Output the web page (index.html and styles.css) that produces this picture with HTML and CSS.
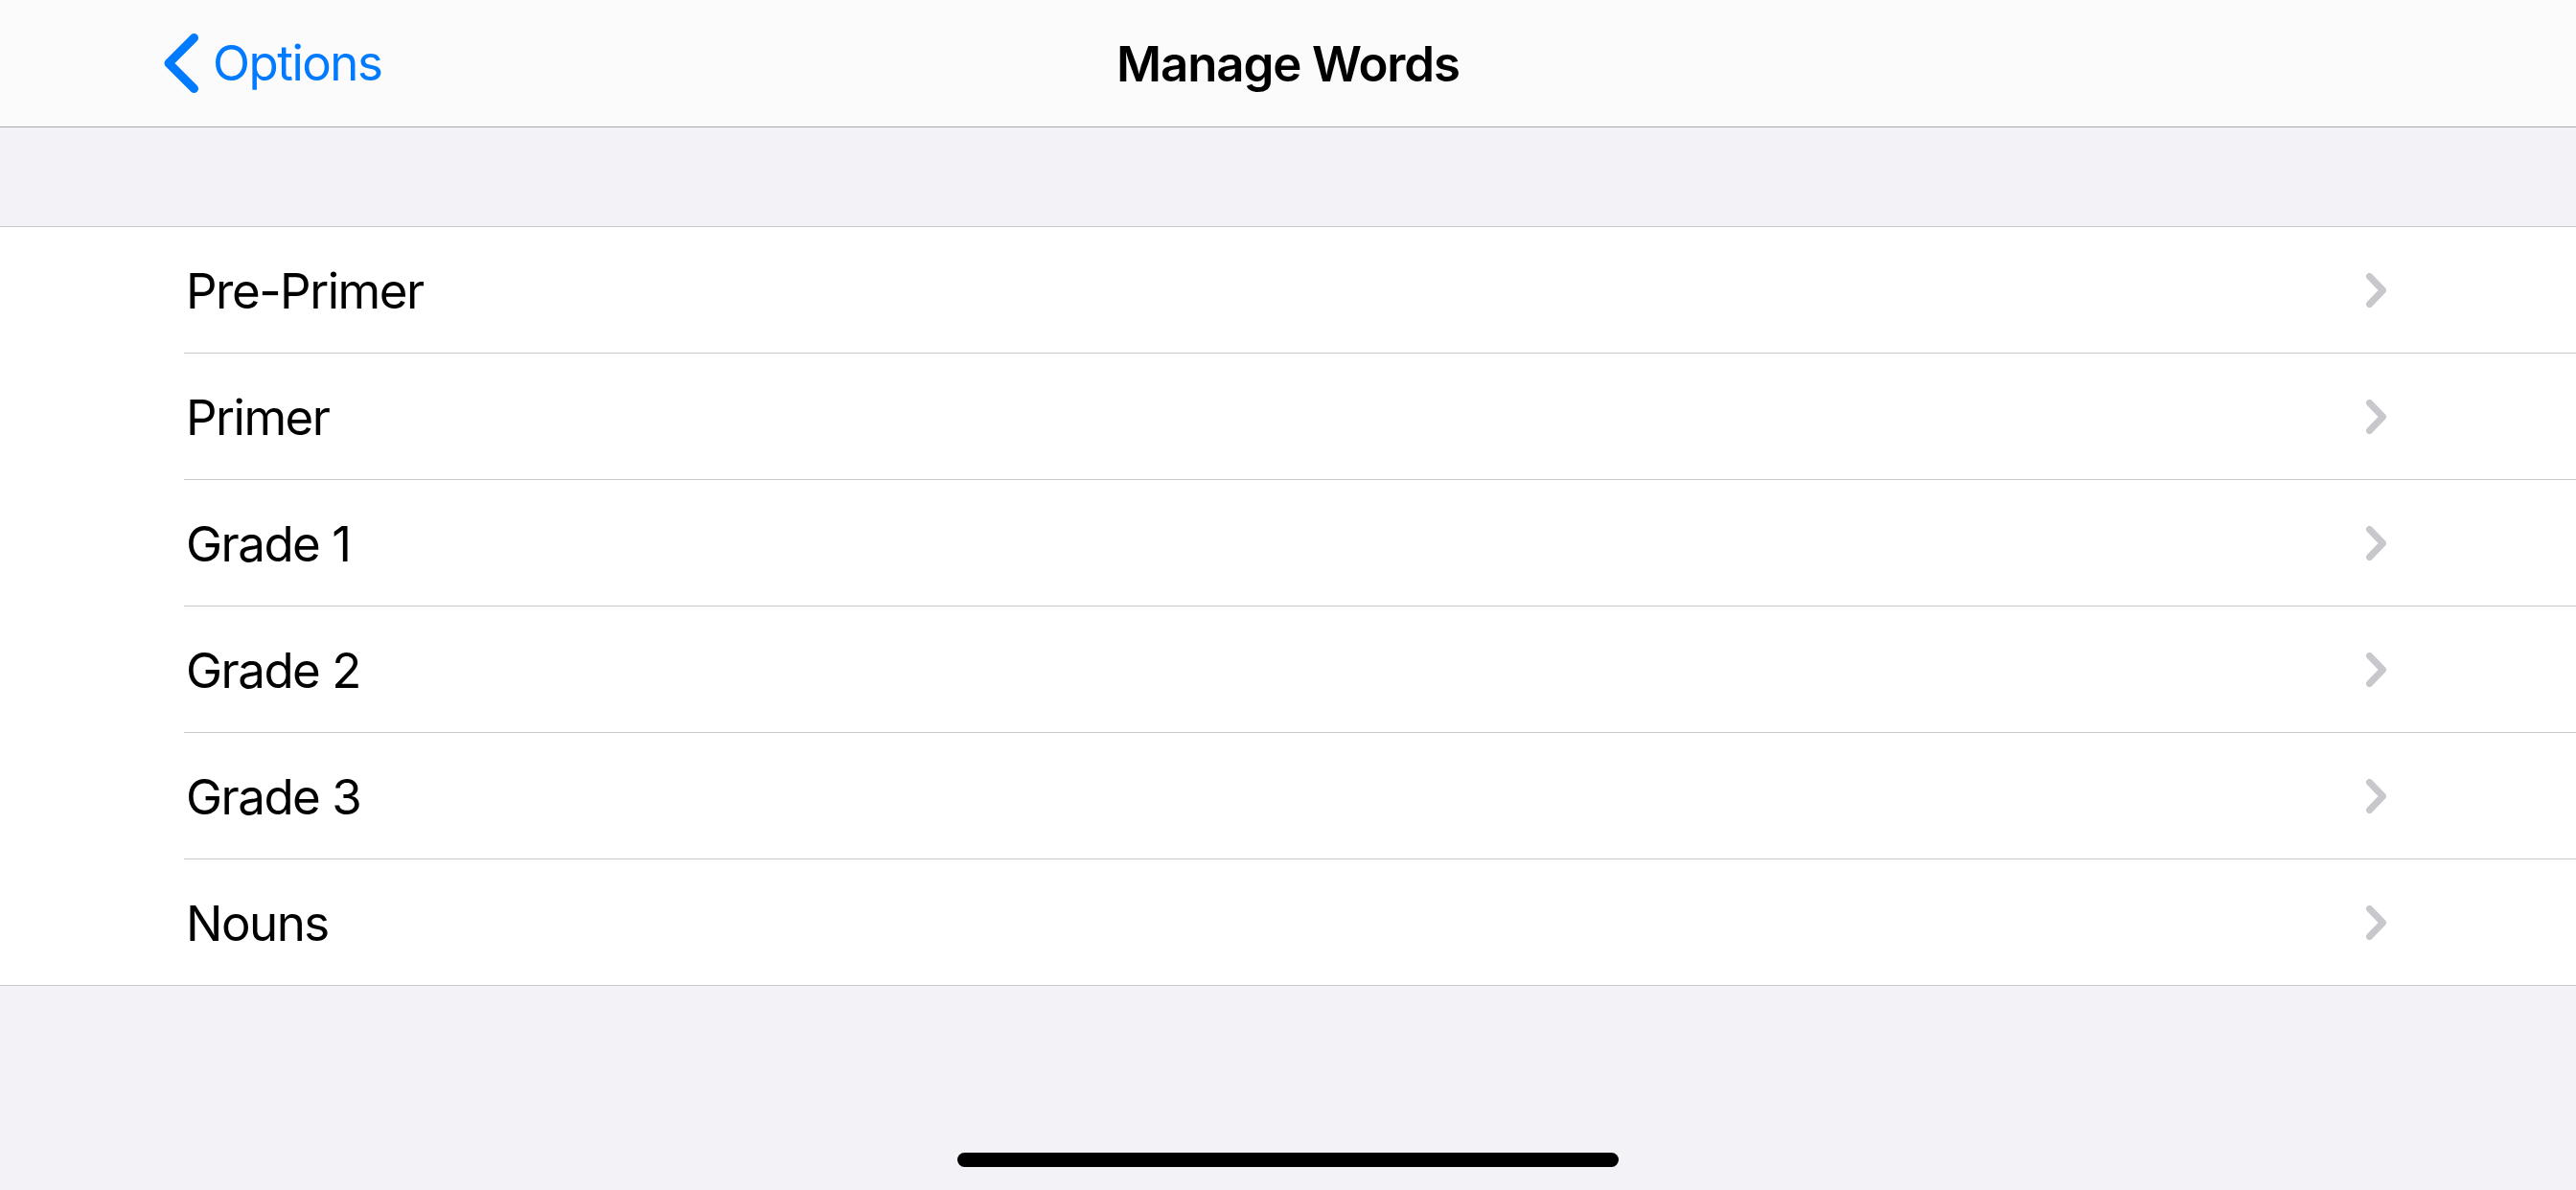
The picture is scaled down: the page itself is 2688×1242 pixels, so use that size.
FILE: index.html
```html
<!DOCTYPE html>
<html lang="en">
<head>
<meta charset="utf-8">
<title>Manage Words</title>
<link rel="stylesheet" href="styles.css">
</head>
<body>
<div class="screen">
  <header class="navbar">
    <a class="back" href="#">
      <svg class="back-chevron" width="36" height="62" viewBox="0 0 36 62">
        <polyline points="31.5,4.5 5,31 31.5,57.5" fill="none" stroke="#007aff" stroke-width="9" stroke-linecap="round" stroke-linejoin="round"/>
      </svg>
      <span class="back-label">Options</span>
    </a>
    <h1 class="title">Manage Words</h1>
  </header>

  <div class="group-gap"></div>

  <ul class="table">
    <li class="cell"><span class="cell-label">Pre-Primer</span><svg class="disclosure" width="21" height="36" viewBox="0 0 21 36"><polyline points="3.5,3.5 17.5,18 3.5,32.5" fill="none" stroke="#c7c7cc" stroke-width="7" stroke-linecap="round" stroke-linejoin="round"/></svg></li>
    <li class="cell"><span class="cell-label">Primer</span><svg class="disclosure" width="21" height="36" viewBox="0 0 21 36"><polyline points="3.5,3.5 17.5,18 3.5,32.5" fill="none" stroke="#c7c7cc" stroke-width="7" stroke-linecap="round" stroke-linejoin="round"/></svg></li>
    <li class="cell"><span class="cell-label">Grade 1</span><svg class="disclosure" width="21" height="36" viewBox="0 0 21 36"><polyline points="3.5,3.5 17.5,18 3.5,32.5" fill="none" stroke="#c7c7cc" stroke-width="7" stroke-linecap="round" stroke-linejoin="round"/></svg></li>
    <li class="cell"><span class="cell-label">Grade 2</span><svg class="disclosure" width="21" height="36" viewBox="0 0 21 36"><polyline points="3.5,3.5 17.5,18 3.5,32.5" fill="none" stroke="#c7c7cc" stroke-width="7" stroke-linecap="round" stroke-linejoin="round"/></svg></li>
    <li class="cell"><span class="cell-label">Grade 3</span><svg class="disclosure" width="21" height="36" viewBox="0 0 21 36"><polyline points="3.5,3.5 17.5,18 3.5,32.5" fill="none" stroke="#c7c7cc" stroke-width="7" stroke-linecap="round" stroke-linejoin="round"/></svg></li>
    <li class="cell"><span class="cell-label">Nouns</span><svg class="disclosure" width="21" height="36" viewBox="0 0 21 36"><polyline points="3.5,3.5 17.5,18 3.5,32.5" fill="none" stroke="#c7c7cc" stroke-width="7" stroke-linecap="round" stroke-linejoin="round"/></svg></li>
  </ul>

  <div class="home-indicator"></div>
</div>
</body>
</html>
```

FILE: styles.css
```css
* {
  box-sizing: border-box;
}

html, body {
  margin: 0;
  padding: 0;
}

body {
  background: #f2f2f7;
  font-family: "Inter", "Roboto", "Liberation Sans", sans-serif;
  -webkit-font-smoothing: antialiased;
}

.screen {
  position: relative;
  width: 2688px;
  height: 1242px;
  overflow: hidden;
  background: #f2f2f7;
}

/* Navigation bar */
.navbar {
  position: relative;
  height: 133px;
  background: #fbfbfb;
  border-bottom: 1px solid #a9a9ac;
  display: flex;
  align-items: center;
  padding-left: 171px;
}

.back {
  display: flex;
  align-items: center;
  gap: 15px;
  text-decoration: none;
  color: #007aff;
  margin-top: -1px;
}

.back-chevron {
  display: block;
}

.back-label {
  font-size: 51px;
  font-weight: 400;
  letter-spacing: -1.5px;
  line-height: 1;
}

.title {
  position: absolute;
  left: 0;
  right: 0;
  top: 0;
  bottom: 0;
  margin: 0;
  display: flex;
  align-items: center;
  justify-content: center;
  font-size: 51px;
  font-weight: 600;
  color: #000;
  letter-spacing: -1.1px;
  pointer-events: none;
}

/* Grouped table */
.group-gap {
  height: 103px;
}

.table {
  list-style: none;
  margin: 0;
  padding: 0;
  background: #fff;
  border-top: 1px solid #c8c7cc;
  border-bottom: 1px solid #c8c7cc;
}

.cell {
  display: flex;
  align-items: center;
  justify-content: space-between;
  height: 132px;
  margin-left: 192px;
  padding-right: 198px;
  border-bottom: 1px solid #c8c7cc;
}

.cell:last-child {
  border-bottom: none;
  height: 131px;
}

.cell-label {
  font-size: 51px;
  color: #000;
  letter-spacing: -1.5px;
  line-height: 1;
  padding-left: 2px;
  padding-top: 2px;
}

.disclosure {
  display: block;
}

/* Home indicator */
.home-indicator {
  position: absolute;
  left: 999px;
  top: 1203px;
  width: 690px;
  height: 15px;
  border-radius: 8px;
  background: #000;
}
```
